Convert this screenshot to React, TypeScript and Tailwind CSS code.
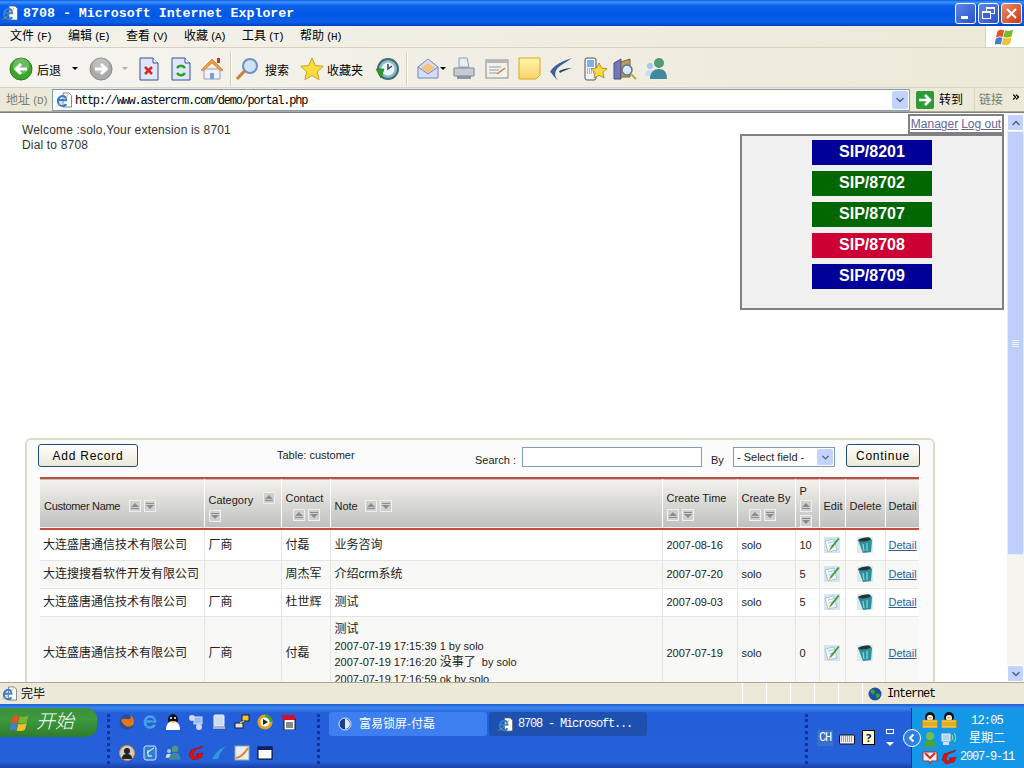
import type { ReactNode } from "react"
import { ChevronDown, ChevronUp, ChevronsRight } from "lucide-react"

const cjk = "font-['Liberation_Sans','Noto_Sans_CJK_SC',sans-serif]"
const mono = "font-['Liberation_Mono','Noto_Sans_CJK_SC',monospace]"

function IeIcon({ size = 16 }: { size?: number }) {
  return (
    <svg width={size} height={size} viewBox="0 0 16 16">
      <path d="M7 1h6l2.500 2.500V15H7z" fill="#fff" stroke="#666" strokeWidth="0.800" />
      <path d="M2.500 8.200h7.500C10 5.500 8.500 4 6.500 4S2 6 2 9s2 5 4.500 5c1.800 0 3-.8 3.500-2" fill="none" stroke="#2f7fd8" strokeWidth="2.200" />
      <path d="M.5 14C3 14 10 8 12 2.500" stroke="#e0a030" strokeWidth="0.800" fill="none" />
    </svg>
  )
}

function RoundArrow({ gray = false }: { gray?: boolean }) {
  return (
    <svg width="24" height="24" viewBox="0 0 24 24">
      <circle cx="12" cy="12" r="11" fill={gray ? "#a9a9a9" : "#3da52d"} stroke={gray ? "#8a8a8a" : "#27801e"} />
      <circle cx="12" cy="9" r="8" fill="#fff" opacity="0.25" />
      {gray ? (
        <path d="M6 12h10M12 7l5 5-5 5" stroke="#fff" strokeWidth="3" fill="none" />
      ) : (
        <path d="M18 12H8M12 7l-5 5 5 5" stroke="#fff" strokeWidth="3" fill="none" />
      )}
    </svg>
  )
}

function PageIcon({ children }: { children: ReactNode }) {
  return (
    <svg width="20" height="24" viewBox="0 0 20 24">
      <path d="M1 1h13l5 5v17H1z" fill="#dfe8fa" stroke="#36509e" />
      <path d="M14 1v5h5" fill="#fff" stroke="#36509e" />
      {children}
    </svg>
  )
}

function HomeIcon() {
  return (
    <svg width="24" height="24" viewBox="0 0 24 24">
      <path d="M4 12v10h16V12z" fill="#f3f4fb" stroke="#8fa0c8" />
      <path d="M10 16h4v6h-4z" fill="#7b9ed8" />
      <path d="M1 13 12 2l11 11-2 1-9-8-9 8z" fill="#ef9a3c" stroke="#c96f1e" strokeWidth="0.600" />
      <rect x="17" y="1" width="3" height="5" fill="#c0392b" />
    </svg>
  )
}

function SearchIcon() {
  return (
    <svg width="24" height="24" viewBox="0 0 24 24">
      <circle cx="15" cy="9" r="7" fill="#cfe3fa" stroke="#6f8fc0" strokeWidth="2" />
      <path d="M9.500 14 2 22" stroke="#c9803a" strokeWidth="3" />
    </svg>
  )
}

function StarIcon({ size = 24 }: { size?: number }) {
  return (
    <svg width={size} height={size} viewBox="0 0 24 24">
      <path d="m12 1 3.300 7.500 8 .8-6 5.400 1.800 8L12 18.500 4.900 22.700l1.800-8-6-5.400 8-.8z" fill="#fbdc3c" stroke="#c9a21e" />
    </svg>
  )
}

function HistoryIcon() {
  return (
    <svg width="24" height="24" viewBox="0 0 24 24">
      <circle cx="13" cy="12" r="10" fill="#8fb8d0" stroke="#3f6f6a" strokeWidth="2" />
      <circle cx="13" cy="12" r="6.500" fill="#eef4f8" />
      <path d="M13 7v5l4-3" stroke="#2a4a60" strokeWidth="1.500" fill="none" />
      <path d="M1 12h8l-3 9z" fill="#2f9a2a" stroke="#1f701c" strokeWidth="0.600" />
    </svg>
  )
}

function MailIcon() {
  return (
    <svg width="24" height="24" viewBox="0 0 24 24">
      <path d="M2 10 12 2l10 8v11H2z" fill="#d6def5" stroke="#7585b8" />
      <path d="M5 11 12 6l7 5-7 5z" fill="#f4c27a" />
      <path d="M2 10l10 7 10-7" fill="none" stroke="#7585b8" />
    </svg>
  )
}

function PrintIcon() {
  return (
    <svg width="24" height="24" viewBox="0 0 24 24">
      <path d="M7 1h8l2 9H7z" fill="#e6f0fa" stroke="#8a9ab0" />
      <path d="M2 11h20v8H2z" fill="#c8ccd4" stroke="#7b8290" />
      <path d="M5 19h14v3H5z" fill="#8f95a0" />
    </svg>
  )
}

function EditPageIcon() {
  return (
    <svg width="24" height="22" viewBox="0 0 24 22">
      <rect x="1" y="2" width="22" height="18" fill="#f1f1ee" stroke="#8a8a8a" />
      <rect x="1" y="2" width="22" height="3" fill="#b8b8b8" />
      <path d="M4 9h12M4 12h10M4 15h8" stroke="#9a9a9a" />
      <path d="m12 16 8-6" stroke="#c0803a" strokeWidth="1.500" />
    </svg>
  )
}

function NoteIcon() {
  return (
    <svg width="23" height="23" viewBox="0 0 23 23">
      <defs>
        <linearGradient id="note" x1="0" y1="0" x2="0" y2="1">
          <stop offset="0" stopColor="#fff6a8" />
          <stop offset="1" stopColor="#fbd36a" />
        </linearGradient>
      </defs>
      <path d="M1 1h21v17l-4 4H1z" fill="url(#note)" stroke="#d9a520" />
    </svg>
  )
}

function BirdIcon() {
  return (
    <svg width="24" height="24" viewBox="0 0 24 24">
      <path d="M1 15C5 8 13 4 23 1 16 6 10 9 8 12c-2 2-3 8 1 11-4-2-5-6-8-8z" fill="#3f5f9f" />
      <path d="M10 14c4-2 8-3 13-3-4 1-9 3-12 5z" fill="#26407a" />
    </svg>
  )
}

function PhoneStarIcon() {
  return (
    <svg width="24" height="24" viewBox="0 0 24 24">
      <rect x="1" y="1" width="11" height="22" rx="2" fill="#f2f2fa" stroke="#555" />
      <rect x="3" y="3" width="7" height="7" fill="#7cb2ea" />
      <path d="M3 12h7M3 14h7M3 16h7" stroke="#777" strokeDasharray="1 1" />
      <path d="m15 6 2.500 5 5.500.6-4 3.800 1 5.600-5-2.800-5 2.800 1-5.600-4-3.800 5.500-.6z" fill="#fbdc3c" stroke="#8a5a10" strokeWidth="0.600" />
    </svg>
  )
}

function BooksIcon() {
  return (
    <svg width="24" height="24" viewBox="0 0 24 24">
      <path d="M1 6 8 2v20H1z" fill="#7078b8" stroke="#444c88" />
      <path d="M8 5l9-3v18H8z" fill="#b49a6a" stroke="#7a6338" />
      <circle cx="14" cy="13" r="5" fill="#d8ecf8" stroke="#5a7690" strokeWidth="1.500" />
      <path d="m18 17 5 5" stroke="#c9a23a" strokeWidth="2" />
    </svg>
  )
}

function MessengerIcon({ size = 24 }: { size?: number }) {
  return (
    <svg width={size} height={size} viewBox="0 0 24 24">
      <circle cx="6" cy="9" r="3" fill="#a8c4e8" />
      <path d="M1 19c0-4 2-6 5-6s5 2 5 6z" fill="#cfdcee" />
      <circle cx="15" cy="6" r="5" fill="#4f9a78" />
      <path d="M6 22c0-7 4-10 9-10s8 3 8 10z" fill="#3f8aa0" />
    </svg>
  )
}

function XpFlag({ size = 24 }: { size?: number }) {
  return (
    <svg width={size} height={size} viewBox="0 0 24 24">
      <path d="M3 5c3-2 5-2 8-1l-2 8c-3-1-5-1-8 1z" fill="#e2532a" />
      <path d="M12 4c3 1 6 1 10-1l-2 8c-4 2-6 2-10 1z" fill="#7cb82f" />
      <path d="M1 14c3-2 5-2 8-1l-2 8c-3-1-5-1-8 1z" fill="#3f7fd8" />
      <path d="M10 13c3 1 6 1 10-1l-2 8c-4 2-6 2-10 1z" fill="#f5c02c" />
    </svg>
  )
}

function ToolbarDivider() {
  return <div className="mx-[2px] h-[34px] w-[2px] border-l border-r border-l-[#d5d0bb] border-r-white" />
}

function Caret({ gray = false }: { gray?: boolean }) {
  return <span className={`h-0 w-0 border-x-[3px] border-t-[3px] border-x-transparent ${gray ? "border-t-[#b0b0a8]" : "border-t-black"}`} />
}

function TitleBar() {
  return (
    <div className="flex h-[26px] items-center bg-[linear-gradient(to_bottom,#0a5be0_0%,#3d95ff_8%,#0a5fe8_22%,#0058e6_60%,#0a5fe8_85%,#0040b8_100%)] pl-[2px] pr-[2px]">
      <IeIcon size={16} />
      <span className={`ml-[5px] pt-[1px] text-[13.300px] font-bold text-white ${mono}`}>8708 - Microsoft Internet Explorer</span>
      <div className="ml-auto flex gap-[2px]">
        <div className="flex h-[21px] w-[21px] items-end rounded-[3px] border border-white bg-[linear-gradient(135deg,#5f86e8,#2a4fd0)] pb-[4px] pl-[5px]">
          <div className="h-[3px] w-[7px] bg-white" />
        </div>
        <div className="relative h-[21px] w-[21px] rounded-[3px] border border-white bg-[linear-gradient(135deg,#5f86e8,#2a4fd0)]">
          <div className="absolute left-[7px] top-[3px] h-[7px] w-[9px] border border-t-2 border-white" />
          <div className="absolute left-[3px] top-[7px] h-[8px] w-[9px] border border-t-2 border-white bg-[#3d62d8]" />
        </div>
        <div className="flex h-[21px] w-[21px] items-center justify-center rounded-[3px] border border-white bg-[linear-gradient(135deg,#ea8a68,#c93a18)]">
          <svg width="13" height="13" viewBox="0 0 13 13">
            <path d="m2 2 9 9M11 2l-9 9" stroke="#fff" strokeWidth="2" />
          </svg>
        </div>
      </div>
    </div>
  )
}

const menuItems = [
  { label: "文件", key: "(F)" },
  { label: "编辑", key: "(E)" },
  { label: "查看", key: "(V)" },
  { label: "收藏", key: "(A)" },
  { label: "工具", key: "(T)" },
  { label: "帮助", key: "(H)" },
]

function MenuBar() {
  return (
    <div className="flex h-[22px] items-center border-b border-[#d8d3c0] bg-[linear-gradient(to_right,#f3f2ec,#ece9d8)] pl-[10px]">
      <div className="flex gap-[17px]">
        {menuItems.map((item) => (
          <span key={item.label} className={`w-[41px] whitespace-nowrap text-[12px] text-black ${cjk}`}>
            {item.label}
            <span className={`ml-[2px] text-[11px] tracking-[-1.600px] ${mono}`}>{item.key}</span>
          </span>
        ))}
      </div>
      <div className="ml-auto flex h-full w-[39px] items-center justify-center border-l border-[#d8d3c0] bg-white">
        <XpFlag size={20} />
      </div>
    </div>
  )
}

function ToolbarLabel({ children }: { children: ReactNode }) {
  return <span className={`text-[12px] text-black ${cjk}`}>{children}</span>
}

function Toolbar() {
  return (
    <div className="flex h-[40px] items-center border-b border-[#d8d3c0] bg-[linear-gradient(to_right,#f5f4ef,#ece9d8)] pl-[9px] pt-[2px]">
      <RoundArrow />
      <span className="ml-[4px]">
        <ToolbarLabel>后退</ToolbarLabel>
      </span>
      <span className="ml-[11px] flex">
        <Caret />
      </span>
      <span className="ml-[11px]">
        <RoundArrow gray />
      </span>
      <span className="ml-[9px] flex">
        <Caret gray />
      </span>
      <span className="ml-[11px]">
        <PageIcon>
          <path d="m6 10 7 7M13 10l-7 7" stroke="#d92a1c" strokeWidth="2.500" />
        </PageIcon>
      </span>
      <span className="ml-[12px]">
        <PageIcon>
          <path d="M6 11c2-3 6-3 8 0M14 16c-2 3-6 3-8 0" stroke="#2aa02a" strokeWidth="2.500" fill="none" />
        </PageIcon>
      </span>
      <span className="ml-[9px]">
        <HomeIcon />
      </span>
      <span className="ml-[4px]">
        <ToolbarDivider />
      </span>
      <span className="ml-[1px]">
        <SearchIcon />
      </span>
      <span className="ml-[6px]">
        <ToolbarLabel>搜索</ToolbarLabel>
      </span>
      <span className="ml-[11px]">
        <StarIcon />
      </span>
      <span className="ml-[3px]">
        <ToolbarLabel>收藏夹</ToolbarLabel>
      </span>
      <span className="ml-[12px]">
        <HistoryIcon />
      </span>
      <span className="ml-[5px]">
        <ToolbarDivider />
      </span>
      <span className="ml-[6px]">
        <MailIcon />
      </span>
      <span className="flex">
        <Caret />
      </span>
      <span className="ml-[6px]">
        <PrintIcon />
      </span>
      <span className="ml-[9px]">
        <EditPageIcon />
      </span>
      <span className="ml-[9px]">
        <NoteIcon />
      </span>
      <span className="ml-[8px]">
        <BirdIcon />
      </span>
      <span className="ml-[11px]">
        <PhoneStarIcon />
      </span>
      <span className="ml-[5px]">
        <BooksIcon />
      </span>
      <span className="ml-[7px]">
        <MessengerIcon />
      </span>
    </div>
  )
}

function AddressBar() {
  return (
    <div className="flex h-[24px] items-center border-b border-[#aca899] bg-[#ece9d8] pl-[6px]">
      <span className={`w-[46px] pt-[1px] text-[12px] text-[#7b7b70] ${cjk}`}>
        地址<span className={`ml-[2px] text-[11px] tracking-[-1.600px] ${mono}`}>(D)</span>
      </span>
      <div className="mt-[1px] flex h-[22px] w-[858px] items-center border border-[#7f9db9] bg-white pl-[3px] pr-[1px]">
        <IeIcon size={16} />
        <span className={`ml-[3px] pt-[1px] text-[12px] tracking-[-1.250px] text-black ${mono}`}>http://www.astercrm.com/demo/portal.php</span>
        <div className="ml-auto flex h-[18px] w-[16px] items-center justify-center rounded-[2px] bg-[#c3d3fb]">
          <ChevronDown size={12} strokeWidth={3} color="#4d6185" />
        </div>
      </div>
      <div className="ml-[6px] flex h-[18px] w-[18px] items-center justify-center rounded-[2px] bg-[#2f9a35]">
        <svg width="14" height="14" viewBox="0 0 14 14">
          <path d="M1 7h10M7 2l5 5-5 5" stroke="#fff" strokeWidth="2.500" fill="none" />
        </svg>
      </div>
      <span className={`ml-[5px] pt-[1px] text-[12px] text-black ${cjk}`}>转到</span>
      <div className="ml-[11px] flex h-full flex-1 items-center border-l border-[#d8d3c0] pl-[4px]">
        <span className={`pt-[1px] text-[12px] text-[#7b7b70] ${cjk}`}>链接</span>
        <ChevronsRight size={10} strokeWidth={3} color="#000" className="mb-[6px] ml-[8px]" />
      </div>
    </div>
  )
}

function Scrollbar() {
  return (
    <div className="flex w-[17px] shrink-0 flex-col bg-[#f5f5ee] pt-[1px]">
      <div className="flex h-[17px] items-center justify-center rounded-[2px] border border-[#fff] bg-[#c3d3fb]">
        <ChevronUp size={12} strokeWidth={3} color="#4d6185" />
      </div>
      <div className="flex h-[424px] items-center justify-center rounded-[2px] border border-[#e4ebfd] bg-[#bdcffa]">
        <div className="h-[7px] w-[7px] border-y border-[#eef2fe] py-[1px]">
          <div className="h-[3px] border-y border-[#eef2fe]" />
        </div>
      </div>
      <div className="flex-1" />
      <div className="flex h-[17px] items-center justify-center rounded-[2px] border border-[#fff] bg-[#c3d3fb]">
        <ChevronDown size={12} strokeWidth={3} color="#4d6185" />
      </div>
    </div>
  )
}

const sortBox = "flex h-[12px] w-[12px] shrink-0 flex-col items-center justify-center gap-[1px] border border-[#efefef] bg-[#cfcfcf]"

function SortUp() {
  return (
    <span className={sortBox}>
      <span className="h-0 w-0 border-x-[4px] border-b-[4px] border-x-transparent border-b-[#8c8c8c]" />
      <span className="h-[1px] w-[8px] bg-[#8c8c8c]" />
    </span>
  )
}

function SortDown() {
  return (
    <span className={sortBox}>
      <span className="h-[1px] w-[8px] bg-[#8c8c8c]" />
      <span className="h-0 w-0 border-x-[4px] border-t-[4px] border-x-transparent border-t-[#8c8c8c]" />
    </span>
  )
}

function SortPair({ stacked = false }: { stacked?: boolean }) {
  return (
    <span className={`inline-flex ${stacked ? "flex-col gap-[3px]" : "gap-[3px]"} align-middle`}>
      <SortUp />
      <SortDown />
    </span>
  )
}

function EditIcon() {
  return (
    <svg width="16" height="16" viewBox="0 0 16 16">
      <rect width="16" height="16" fill="#d5e6ee" />
      <path d="M1 4 10 2l3 11-9 2z" fill="#f4fafc" stroke="#8fb0c0" strokeWidth="0.700" />
      <path d="M4 6l6-1.500M5 9l5-1.300" stroke="#a8c6d4" />
      <path d="M6 11 14 1l1.500 1-8 10z" fill="#3f9a3a" />
      <path d="M6 11l-1 3 2.500-2z" fill="#e07a20" />
    </svg>
  )
}

function TrashIcon() {
  return (
    <svg width="16" height="16" viewBox="0 0 16 16">
      <rect width="16" height="16" fill="#dfeaec" />
      <path d="M1 3 12 0l3 3-1 12-8 1z" fill="#2b8f9c" />
      <path d="M1 3c3-2 10-4 13-1-2 2-10 4-13 1z" fill="#2a3336" />
      <path d="M6 7l1 7M10 6l0 8" stroke="#8ed6dc" strokeWidth="1.200" />
    </svg>
  )
}

const rows = [
  { name: "大连盛唐通信技术有限公司", cat: "厂商", contact: "付磊", note: "业务咨询", time: "2007-08-16", p: "10", h: "h-[31px]", bg: "bg-white" },
  { name: "大连搜搜看软件开发有限公司", cat: "", contact: "周杰军", note: "介绍crm系统", time: "2007-07-20", p: "5", h: "h-[28px]", bg: "bg-[#f8f8f6]" },
  { name: "大连盛唐通信技术有限公司", cat: "厂商", contact: "杜世辉", note: "测试", time: "2007-09-03", p: "5", h: "h-[28px]", bg: "bg-white" },
]

const th = "border-r border-white px-[4px] text-left align-middle text-[11px] font-normal text-[#222]"
const td = "border-b border-r border-[#e4e4e0] px-[4px] text-[11px]"
const tdCjk = "border-b border-r border-[#e4e4e0] px-[4px] text-[12px] text-[#222]"
const tdName = "whitespace-nowrap border-b border-r border-[#e4e4e0] pl-[3px] text-[12px] text-[#222]"

function ActionCells() {
  return (
    <>
      <td className={`${td} text-[#222]`}><EditIcon /></td>
      <td className={`${td} text-[#222]`}><span className="ml-[7px] block"><TrashIcon /></span></td>
      <td className="border-b border-[#e4e4e0] pl-[3px] text-[11px] text-[#2a5f9e] underline">Detail</td>
    </>
  )
}

function CustomerTable() {
  return (
    <table className={`ml-[2px] w-[879px] table-fixed border-collapse ${cjk}`}>
      <colgroup>
        <col className="w-[164px]" />
        <col className="w-[77px]" />
        <col className="w-[49px]" />
        <col className="w-[332px]" />
        <col className="w-[75px]" />
        <col className="w-[58px]" />
        <col className="w-[24px]" />
        <col className="w-[26px]" />
        <col className="w-[40px]" />
        <col className="w-[34px]" />
      </colgroup>
      <thead>
        <tr className="h-[51px] border-y-2 border-[#c24d3c] bg-[linear-gradient(to_bottom,#f3f2ec,#c0c0c0)]">
          <th className={`${th} pt-[6px]`}>
            <span className="tracking-[-0.300px]">Customer Name</span>
            <span className="relative -top-[1px] ml-[9px]"><SortPair /></span>
          </th>
          <th className={`${th} pt-[6px]`}>
            <div className="flex flex-wrap items-start">
              <span className="mr-[10px] leading-[16px]">Category</span>
              <SortUp />
              <span className="mt-[2px] basis-full"><SortDown /></span>
            </div>
          </th>
          <th className={`${th} pt-[5px]`}>
            <div className="leading-[15px]">Contact</div>
            <div className="pl-[7px] leading-[14px]"><SortPair /></div>
          </th>
          <th className={`${th} pt-[6px]`}>
            Note
            <span className="relative -top-[1px] ml-[7px]"><SortPair /></span>
          </th>
          <th className={`${th} pt-[5px]`}>
            <div className="leading-[15px]">Create Time</div>
            <div className="leading-[14px]"><SortPair /></div>
          </th>
          <th className={`${th} pt-[5px]`}>
            <div className="leading-[15px]">Create By</div>
            <div className="pl-[7px] leading-[14px]"><SortPair /></div>
          </th>
          <th className={`${th} pt-[4px]`}>
            <div className="mb-[3px] leading-[12px]">P</div>
            <SortPair stacked />
          </th>
          <th className={`${th} pt-[6px]`}>Edit</th>
          <th className={`${th} pt-[6px]`}>Delete</th>
          <th className="pl-[3px] pt-[6px] text-left align-middle text-[11px] font-normal text-[#222]">Detail</th>
        </tr>
      </thead>
      <tbody>
        {rows.map((row) => (
          <tr key={row.time} className={`${row.h} ${row.bg}`}>
            <td className={tdName}>{row.name}</td>
            <td className={tdCjk}>{row.cat}</td>
            <td className={`${tdCjk} whitespace-nowrap`}>{row.contact}</td>
            <td className={tdCjk}>{row.note}</td>
            <td className={`${td} text-[#222]`}>{row.time}</td>
            <td className={`${td} text-[#222]`}>solo</td>
            <td className={`${td} text-[#222]`}>{row.p}</td>
            <ActionCells />
          </tr>
        ))}
        <tr className="bg-[#f8f8f6]">
          <td className={tdName}>大连盛唐通信技术有限公司</td>
          <td className={tdCjk}>厂商</td>
          <td className={tdCjk}>付磊</td>
          <td className={`${tdCjk} py-[3px]`}>
            <div className="pt-[1px] leading-[17px]">测试</div>
            <div className="text-[11px] leading-[16px]">2007-07-19 17:15:39 1 by solo</div>
            <div className="text-[11px] leading-[17px]">2007-07-19 17:16:20 <span className="text-[12px]">没事了</span>&nbsp; by solo</div>
            <div className="text-[11px] leading-[16px]">2007-07-19 17:16:59 ok by solo</div>
          </td>
          <td className={`${td} text-[#222]`}>2007-07-19</td>
          <td className={`${td} text-[#222]`}>solo</td>
          <td className={`${td} text-[#222]`}>0</td>
          <ActionCells />
        </tr>
      </tbody>
    </table>
  )
}

function XpButton({ children, width }: { children: ReactNode; width: string }) {
  return (
    <div className={`${width} flex h-[23px] items-center justify-center rounded-[3px] border border-[#1f4f7f] bg-[linear-gradient(to_bottom,#ffffff,#ece9d8)] text-[12px] tracking-[0.750px] text-black`}>
      {children}
    </div>
  )
}

const sips = [
  { name: "SIP/8201", bg: "bg-[#000099]" },
  { name: "SIP/8702", bg: "bg-[#006600]" },
  { name: "SIP/8707", bg: "bg-[#006600]" },
  { name: "SIP/8708", bg: "bg-[#cc0033]" },
  { name: "SIP/8709", bg: "bg-[#000099]" },
]

function PageContent() {
  return (
    <div className={`flex-1 overflow-hidden bg-white ${cjk}`}>
      <div className="flex h-[325px] justify-between pl-[22px] pr-[3px] pt-[1px]">
        <div className="pt-[9px] text-[12px] leading-[15px] tracking-[0.170px] text-[#333]">
          <div>Welcome :solo,Your extension is 8701</div>
          <div>Dial to 8708</div>
        </div>
        <div className="flex flex-col items-end">
          <div className="flex h-[20px] w-[96px] items-center justify-center gap-[3px] border-2 border-[#808080] text-[12px] text-[#66669a] underline">
            <span>Manager</span>
            <span>Log out</span>
          </div>
          <div className="flex h-[176px] w-[264px] flex-col items-center gap-[6px] border-2 border-[#808080] bg-[#f0f0f0] pt-[4px]">
            {sips.map((sip) => (
              <div key={sip.name} className={`flex h-[25px] w-[120px] items-center justify-center pb-[1px] text-[16px] font-bold text-white ${sip.bg}`}>
                {sip.name}
              </div>
            ))}
          </div>
        </div>
      </div>
      <div className="ml-[25px] w-[910px] rounded-t-[6px] border-2 border-b-0 border-[#dcdccc] bg-[#fbfbfb] pb-[20px] pl-[11px] pt-[4px]">
        <div className="flex h-[33px] items-start whitespace-nowrap">
          <XpButton width="w-[100px]">Add Record</XpButton>
          <span className="ml-[139px] mt-[3px] w-[76px] text-[11px] text-[#222]">Table: customer</span>
          <span className="ml-[122px] mt-[8px] w-[40px] text-[11px] text-[#222]">Search :</span>
          <div className="ml-[7px] mt-[3px] h-[20px] w-[180px] border border-[#7f9db9] bg-white" />
          <span className="ml-[9px] mt-[8px] w-[13px] text-[11px] text-[#222]">By</span>
          <div className="ml-[9px] mt-[3px] flex h-[20px] w-[102px] items-center border border-[#7f9db9] bg-white pl-[3px] pr-[1px] text-[11px] text-[#222]">
            - Select field -
            <div className="ml-auto flex h-[16px] w-[16px] items-center justify-center rounded-[2px] bg-[#c3d3fb]">
              <ChevronDown size={11} strokeWidth={3} color="#4d6185" />
            </div>
          </div>
          <div className="ml-[11px]">
            <XpButton width="w-[74px]">Continue</XpButton>
          </div>
        </div>
        <CustomerTable />
      </div>
    </div>
  )
}

function StatusBar() {
  return (
    <div className="flex h-[22px] items-center border-t border-[#aca899] bg-[#ece9d8]">
      <span className="ml-[2px]"><IeIcon size={15} /></span>
      <span className={`ml-[4px] text-[12px] text-black ${cjk}`}>完毕</span>
      <div className="ml-auto flex h-full items-center">
        {[0, 1, 2, 3, 4].map((n) => (
          <div key={n} className="h-full w-[24px] border-l border-[#fff]" />
        ))}
        <div className="flex h-full w-[162px] items-center border-l border-white pl-[5px]">
          <svg width="14" height="14" viewBox="0 0 14 14">
            <circle cx="7" cy="7" r="6.500" fill="#1f4fa8" />
            <path d="M3 3c2-1 4 0 4 2S5 8 4 7 2 5 3 3zM8 7c2-1 4 0 4 1s-2 4-3 3-2-3-1-4z" fill="#3fa02a" />
          </svg>
          <span className={`ml-[5px] text-[12px] tracking-[-1.200px] text-black ${mono}`}>Internet</span>
        </div>
      </div>
    </div>
  )
}

function Grip() {
  return <div className="h-[50px] w-[3px] border-l-[3px] border-dotted border-[#10329a]" />
}

function Penguin() {
  return (
    <svg width="16" height="16" viewBox="0 0 16 16">
      <ellipse cx="8" cy="5" rx="5" ry="5" fill="#111" />
      <ellipse cx="8" cy="6" rx="3" ry="3" fill="#fff" />
      <path d="M5.500 5h5L8 7z" fill="#f5a623" />
      <rect x="0.500" y="8" width="15" height="8" fill="#f2c33a" stroke="#a87a10" strokeWidth="0.500" />
      <path d="M1 11h14M1 13h14" stroke="#a87a10" strokeWidth="0.600" />
    </svg>
  )
}

function RedG() {
  return (
    <svg width="16" height="16" viewBox="0 0 16 16">
      <path d="M15 1 3 5 1 11l4 4 8-2 2-5-7 1 1 2 2 0-4 1-2-2 2-5 6-2z" fill="#e01010" stroke="#a00" strokeWidth="0.500" />
    </svg>
  )
}

const quickLaunch: ReactNode[] = [
  <svg key="ff" width="16" height="16" viewBox="0 0 16 16"><circle cx="8" cy="8" r="7.500" fill="#2c4f90" /><path d="M2 5c1 6 7 10 12 6 2-3 1-8-3-10 2 3 0 5-3 4S4 6 2 5z" fill="#e8751a" /></svg>,
  <svg key="ie" width="16" height="16" viewBox="0 0 16 16"><path d="M3 7.500h10C13 4 11 2.500 8 2.500S3 5 3 8.500s2.500 5 5 5c2.300 0 4-1 4.500-2.800" fill="none" stroke="#4aa3e8" strokeWidth="2.600" /><path d="M1 15C3 15 12 7 15 1" stroke="#1f6fb0" strokeWidth="0.800" fill="none" /></svg>,
  <svg key="qq" width="16" height="16" viewBox="0 0 16 16"><ellipse cx="8" cy="6" rx="5" ry="6" fill="#111" /><path d="M1 16c0-6 3-9 7-9s7 3 7 9z" fill="#fff" /><path d="M5 7h6l-3 2z" fill="#f5a623" /><circle cx="6" cy="4" r="1" fill="#fff" /><circle cx="10" cy="4" r="1" fill="#fff" /></svg>,
  <svg key="net" width="16" height="16" viewBox="0 0 16 16"><circle cx="4" cy="4" r="3" fill="#d4d8e4" /><rect x="6" y="3" width="8" height="7" fill="#8fc0f0" stroke="#dde" /><circle cx="11" cy="13" r="3" fill="#d4d8e4" /></svg>,
  <svg key="pc" width="16" height="16" viewBox="0 0 16 16"><rect x="3" y="1" width="10" height="11" rx="1" fill="#c8dcf8" stroke="#eef" /><rect x="2" y="12" width="12" height="3" fill="#a8b0c4" /></svg>,
  <svg key="nw" width="16" height="16" viewBox="0 0 16 16"><rect x="8" y="1" width="7" height="6" fill="#f2c33a" stroke="#222" /><rect x="1" y="9" width="8" height="5" fill="#dde" stroke="#222" /><path d="M10 7 6 9" stroke="#ff0" /></svg>,
  <svg key="wmp" width="16" height="16" viewBox="0 0 16 16"><circle cx="8" cy="8" r="7.500" fill="#e8a020" /><path d="M8 .5A7.500 7.500 0 0 1 15.500 8H8z" fill="#3fa02a" /><circle cx="8" cy="8" r="4.500" fill="#fff" /><path d="m6 5 5 3-5 3z" fill="#222" /></svg>,
  <svg key="note" width="16" height="16" viewBox="0 0 16 16"><path d="M4 4h11v12H4z" fill="#fff" stroke="#111" /><path d="M1 1h14v5H3z" fill="#d01030" /><path d="M6 9h7M6 11h7M6 13h7" stroke="#111" /></svg>,
  <svg key="user" width="16" height="16" viewBox="0 0 16 16"><circle cx="8" cy="8" r="7.500" fill="#ccc" stroke="#f08a20" /><circle cx="8" cy="6" r="3" fill="#222" /><path d="M3 14c0-4 2-5 5-5s5 1 5 5z" fill="#222" /></svg>,
  <svg key="outlook" width="16" height="16" viewBox="0 0 16 16"><rect x="2" y="1" width="12" height="14" rx="2" fill="#2f7fd8" stroke="#dde" /><path d="M5 8c2-2 4-3 7-5M6 5v6h4" stroke="#fff" fill="none" /></svg>,
  <span key="msn" className="flex"><MessengerIcon size={16} /></span>,
  <span key="g" className="flex"><RedG /></span>,
  <svg key="bird" width="16" height="16" viewBox="0 0 16 16"><path d="M1 14C5 7 9 4 15 1 11 5 8 9 7 14z" fill="#2f9ad8" /></svg>,
  <svg key="paint" width="16" height="16" viewBox="0 0 16 16"><rect x="1" y="1" width="14" height="14" fill="#e8eef8" stroke="#8aa" /><path d="M2 13C7 12 11 8 14 3" stroke="#e8851a" strokeWidth="2" fill="none" /></svg>,
  <svg key="win" width="16" height="16" viewBox="0 0 16 16"><rect x="1" y="2" width="14" height="12" fill="#fff" stroke="#000" /><rect x="1" y="2" width="14" height="3" fill="#0a246a" /></svg>,
]

function Taskbar() {
  return (
    <div className="flex h-[64px] items-start bg-[linear-gradient(to_bottom,#1f5fd8_0%,#3b86e8_6%,#245edb_14%,#2560d8_90%,#1941a5_100%)]">
      <div className="mt-[4px] flex h-[29px] w-[97px] items-center rounded-r-[10px] bg-[linear-gradient(to_bottom,#3c8f3c,#3d9a3d_40%,#2f7a2f)] pl-[10px]">
        <XpFlag size={20} />
        <span className={`ml-[6px] text-[19px] font-light italic text-white ${cjk}`}>开始</span>
      </div>
      <div className="ml-[10px] mt-[10px]"><Grip /></div>
      <div className="ml-[5px] mt-[10px] grid w-[190px] grid-cols-[repeat(8,23px)] gap-y-[15px]">
        {quickLaunch.map((icon, i) => (
          <span key={i} className="flex h-[16px] items-center justify-center">{icon}</span>
        ))}
      </div>
      <div className="ml-[12px] mt-[10px]"><Grip /></div>
      <div className="ml-[9px] mt-[8px] flex h-[24px] w-[158px] items-center rounded-[3px] bg-[#3d7ff0] pl-[9px]">
        <svg width="14" height="14" viewBox="0 0 14 14">
          <circle cx="7" cy="7" r="6" fill="#1e3f90" stroke="#dfe8ff" />
          <path d="M7 2a5 5 0 0 1 0 10z" fill="#dfe8ff" />
        </svg>
        <span className={`ml-[7px] text-[12px] text-white ${cjk}`}>富易锁屏-付磊</span>
      </div>
      <div className="ml-[2px] mt-[8px] flex h-[24px] w-[158px] items-center rounded-[3px] bg-[#1e50b0] pl-[9px]">
        <IeIcon size={15} />
        <span className={`ml-[5px] text-[12px] tracking-[-1.200px] text-white ${mono}`}>8708 - Microsoft...</span>
      </div>
      <div className="ml-[158px] mt-[10px]"><Grip /></div>
      <div className="ml-[9px] mt-[26px] flex h-[16px] w-[16px] items-center justify-center bg-[#3d6fc8] text-[12px] tracking-[-1.200px] text-white">
        <span className={mono}>CH</span>
      </div>
      <div className="ml-[6px] mt-[26px] flex h-[16px] items-center">
        <svg width="16" height="14" viewBox="0 0 16 14">
          <rect x="0.500" y="4" width="15" height="9" rx="1" fill="#eee" stroke="#111" />
          <path d="M2 6h12M2 8h12M2 10h12" stroke="#555" strokeDasharray="1 1" />
        </svg>
      </div>
      <div className="ml-[7px] mt-[26px] flex h-[15px] w-[13px] items-center justify-center border border-black bg-[#fff8c0] text-[11px] font-bold leading-none text-[#10108a]">?</div>
      <div className="ml-[11px] mt-[25px] flex w-[8px] flex-col items-center gap-[8px]">
        <div className="h-[5px] w-[8px] border border-white" />
        <div className="h-0 w-0 border-x-[4px] border-t-[4px] border-x-transparent border-t-white" />
      </div>
      <div className="relative ml-auto mt-[4px] h-[60px] w-[113px] border-l border-[#10329a] bg-[#1597e8]">
        <div className="absolute -left-[9px] top-[21px] flex h-[18px] w-[18px] items-center justify-center rounded-full border border-white bg-[#2f80e0]">
          <svg width="10" height="10" viewBox="0 0 10 10">
            <path d="M6.500 1.500 3 5l3.500 3.500" stroke="#fff" strokeWidth="2" fill="none" />
          </svg>
        </div>
        <div className="grid grid-cols-[38px_54px] pl-[10px] pt-[4px]">
          <div className="grid grid-cols-2 gap-y-[2px]">
            <Penguin />
            <Penguin />
            <svg width="16" height="16" viewBox="0 0 16 16"><circle cx="8" cy="5" r="4" fill="#6fc04f" /><path d="M2 16c0-6 3-7 6-7s6 1 6 7z" fill="#4fa03a" /></svg>
            <svg width="16" height="16" viewBox="0 0 16 16"><rect x="1" y="3" width="8" height="7" fill="#b8d0f0" stroke="#eef" /><rect x="2" y="11" width="6" height="3" fill="#dde" /><path d="M11 4c1 1 1 4 0 5M13 2c2 2 2 7 0 9" stroke="#b0f060" fill="none" /></svg>
            <svg width="16" height="16" viewBox="0 0 16 16"><path d="M1 3h14v9H9l-1 3-1-3H1z" fill="#eee" stroke="#a33" /><path d="M3 4l5 5 5-5" stroke="#d03030" strokeWidth="2" fill="none" /></svg>
            <RedG />
          </div>
          <div className={`flex flex-col items-center whitespace-nowrap pt-[1px] text-[12px] leading-[17px] text-white ${mono}`}>
            <span className="tracking-[-0.800px]">12:05</span>
            <span className={cjk}>星期二</span>
            <span className="mt-[2px] tracking-[-1.200px]">2007-9-11</span>
          </div>
        </div>
      </div>
    </div>
  )
}

export default function App() {
  return (
    <div className="flex h-[768px] w-[1024px] flex-col overflow-hidden">
      <TitleBar />
      <MenuBar />
      <Toolbar />
      <AddressBar />
      <div className="flex h-[570px] shrink-0 overflow-hidden border-t border-[#808080]">
        <PageContent />
        <Scrollbar />
      </div>
      <StatusBar />
      <Taskbar />
    </div>
  )
}
